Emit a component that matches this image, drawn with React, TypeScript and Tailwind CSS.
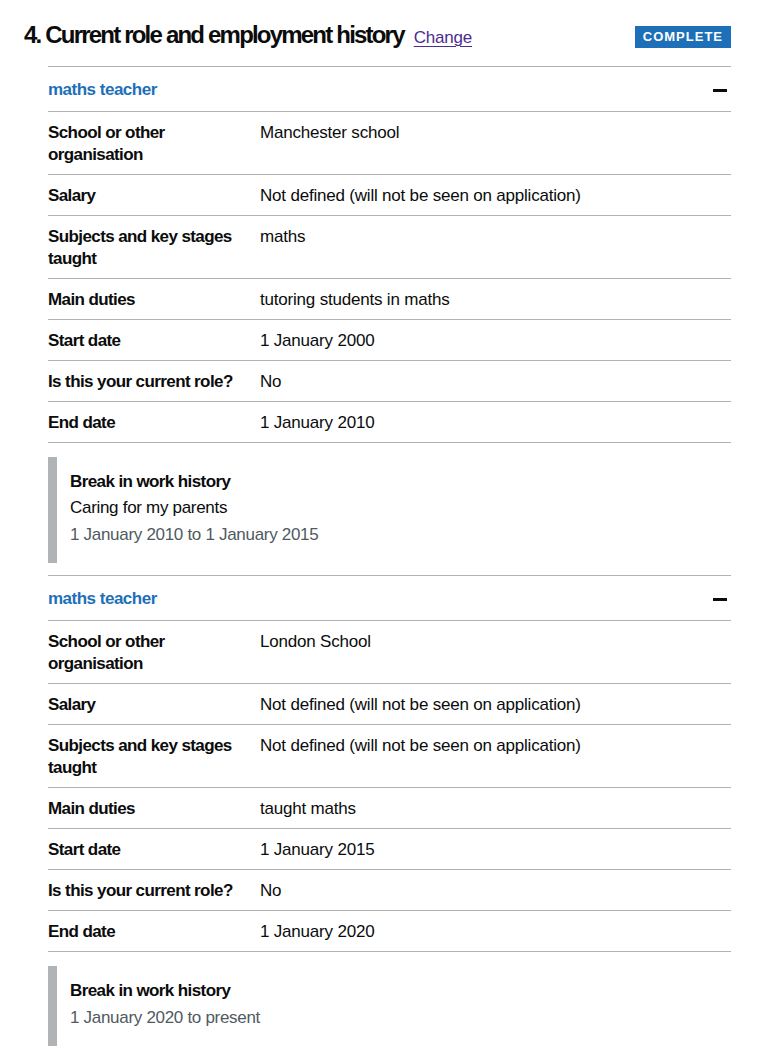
import React from "react";

type Row = { key: string; value: string };

interface Job {
  title: string;
  rows: Row[];
  breakReason?: string;
  breakDates: string;
}

const jobs: Job[] = [
  {
    title: "maths teacher",
    rows: [
      { key: "School or other organisation", value: "Manchester school" },
      { key: "Salary", value: "Not defined (will not be seen on application)" },
      { key: "Subjects and key stages taught", value: "maths" },
      { key: "Main duties", value: "tutoring students in maths" },
      { key: "Start date", value: "1 January 2000" },
      { key: "Is this your current role?", value: "No" },
      { key: "End date", value: "1 January 2010" },
    ],
    breakReason: "Caring for my parents",
    breakDates: "1 January 2010 to 1 January 2015",
  },
  {
    title: "maths teacher",
    rows: [
      { key: "School or other organisation", value: "London School" },
      { key: "Salary", value: "Not defined (will not be seen on application)" },
      {
        key: "Subjects and key stages taught",
        value: "Not defined (will not be seen on application)",
      },
      { key: "Main duties", value: "taught maths" },
      { key: "Start date", value: "1 January 2015" },
      { key: "Is this your current role?", value: "No" },
      { key: "End date", value: "1 January 2020" },
    ],
    breakDates: "1 January 2020 to present",
  },
];

export default function App() {
  return (
    <div className="min-h-screen bg-white pl-6 pr-[41px] pt-5 font-['Liberation_Sans',Arial,sans-serif] text-[#0b0c0c]">
      <div className="flex items-start justify-between">
        <h2 className="flex items-baseline gap-[10px]">
          <span className="text-[24px] font-bold leading-[30px] tracking-[-1.8px]">
            4. Current role and employment history
          </span>
          <a
            href="#"
            className="text-[17px] leading-[22px] tracking-[-0.2px] text-[#4c2c92] underline decoration-1 underline-offset-[3px]"
          >
            Change
          </a>
        </h2>
        <strong className="mt-[6px] h-[22px] bg-[#1d70b8] px-2 text-[13px] font-bold uppercase leading-[22px] tracking-[1px] text-white">
          Complete
        </strong>
      </div>

      <div className="mt-4 pl-6">
        {jobs.map((job, i) => (
          <JobSection key={i} job={job} />
        ))}
      </div>
    </div>
  );
}

function JobSection({ job }: { job: Job }) {
  return (
    <section className="border-t border-[#b1b4b6]">
      <div className="flex items-center justify-between pb-[11px] pt-[13px]">
        <span className="text-[17px] font-bold leading-[20px] tracking-[-0.5px] text-[#1d70b8]">
          {job.title}
        </span>
        <span className="mr-1 h-[3px] w-[14px] bg-[#0b0c0c]" />
      </div>

      <dl className="border-b border-[#b1b4b6]">
        {job.rows.map((row) => (
          <div
            key={row.key}
            className="flex border-t border-[#b1b4b6] pb-[8px] pt-[10px] text-[17px] leading-[22px]"
          >
            <dt className="w-[212px] shrink-0 pr-6 font-bold tracking-[-0.6px]">
              {row.key}
            </dt>
            <dd className="flex-1 tracking-[-0.2px]">{row.value}</dd>
          </div>
        ))}
      </dl>

      <div className="mb-3 mt-[14px] border-l-[9px] border-[#b1b4b6] pb-[17px] pl-[13px] pt-[14px] text-[17px] leading-[22px]">
        <p className="font-bold tracking-[-0.6px]">Break in work history</p>
        {job.breakReason && (
          <p className="mt-1 tracking-[-0.3px]">{job.breakReason}</p>
        )}
        <p className="mt-[5px] tracking-[-0.3px] text-[#505a5f]">
          {job.breakDates}
        </p>
      </div>
    </section>
  );
}
